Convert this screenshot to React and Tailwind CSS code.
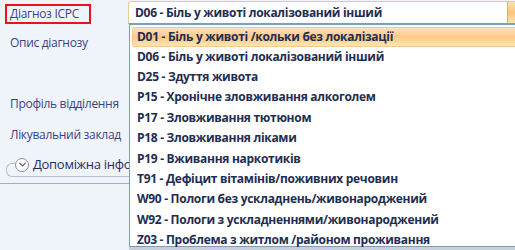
import { ChevronDown } from 'lucide-react'

const ITEMS = [
  'D01 - Біль у животі /кольки без локалізації',
  'D06 - Біль у животі локалізований інший',
  'D25 - Здуття живота',
  'P15 - Хронічне зловживання алкоголем',
  'P17 - Зловживання тютюном',
  'P18 - Зловживання ліками',
  'P19 - Вживання наркотиків',
  'T91 - Дефіцит вітамінів/поживних речовин',
  'W90 - Пологи без ускладнень/живонароджений',
  'W92 - Пологи з ускладненнями/живонароджений',
  'Z03 - Проблема з житлом /районом проживання',
]

export default function App() {
  return (
    <div className="relative w-[515px] h-[250px] overflow-hidden bg-[#eff4fa] font-['Open_Sans',sans-serif] text-[12px] tracking-[-0.3px] text-[#3b3f86]">
      {/* labels */}
      <div className="flex flex-col w-[128px]">
        <div className="h-[24px] flex items-center">
          <div className="ml-[5px] mt-[3px] h-[20px] w-[86px] border-2 border-[#e8141b] flex items-center pl-[3px] leading-none">
            Діагноз ICPC
          </div>
        </div>
        <div className="mt-[4px] h-[30px] flex items-center pl-[10px]">Опис діагнозу</div>
        <div className="mt-[31px] h-[30px] flex items-center pl-[10px]">Профіль відділення</div>
        <div className="mt-[1px] h-[30px] flex items-center pl-[10px]">Лікувальний заклад</div>
      </div>

      {/* collapsible group */}
      <div className="relative ml-[6px] mt-[13px] h-[14px] w-[600px] border-l border-t border-b border-[#b3c0d2] rounded-l-[6px]">
        <div className="absolute left-[8px] top-[-9px] w-[114px] overflow-hidden whitespace-nowrap flex items-center gap-[4px] bg-[#eff4fa] pr-[4px] text-[13px] text-[#252c6e]">
          <span className="shrink-0 w-[14px] h-[14px] rounded-full border border-[#8a8f99] bg-white flex items-center justify-center">
            <ChevronDown size={11} strokeWidth={2.5} className="text-[#505560]" />
          </span>
          <span>Допоміжна інфор</span>
        </div>
      </div>
      <div className="mt-[6px] border-t border-[#a7aeb8]" />

      {/* combobox */}
      <div className="absolute left-[128px] top-[1px] w-[400px] h-[23px] flex bg-white border border-[#e2cf8d] border-b-[#7b9bc9] rounded-tl-[3px]">
        <div className="flex-1 flex items-center pl-[6px] font-bold text-[12px] text-[#1e2d50]">
          D06 - Біль у животі локалізований інший
        </div>
        <div className="w-[20px] ml-[-14px] border-l border-[#c9b576] bg-gradient-to-b from-[#f8e1b5] via-[#fbc57a] to-[#fde4a7]" />
      </div>

      {/* dropdown list */}
      <div className="absolute left-[129px] top-[24px] w-[400px] h-[223px] bg-white border border-[#7f9db9] pt-[1.5px] pl-[2px]">
        {ITEMS.map((t, i) => (
          <div
            key={t}
            className={
              i === 0
                ? 'h-[20px] flex items-center pl-[4px] rounded-[2px] border border-[#f1cb93] bg-gradient-to-b from-[#fbe0c2] via-[#fcc986] to-[#fee6ad] font-bold text-[#1e2d50]'
                : 'h-[20.4px] flex items-center pl-[5px] font-bold text-[#1e2d50]'
            }
          >
            {t}
          </div>
        ))}
      </div>
      <div className="absolute left-[129px] top-[247px] w-[400px] h-[3px] bg-[#c6ced9]" />
    </div>
  )
}
